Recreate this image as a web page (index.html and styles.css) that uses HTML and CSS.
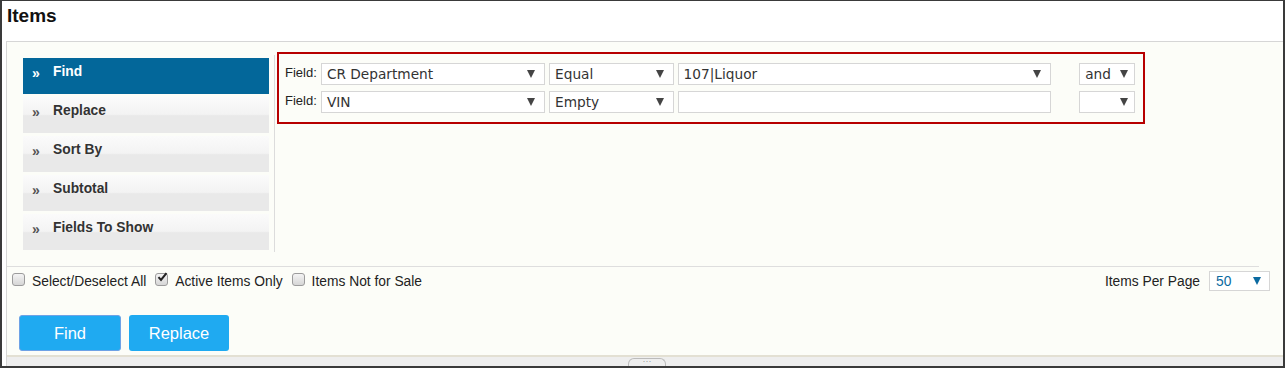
FILE: index.html
```html
<!DOCTYPE html>
<html lang="en">
<head>
    <meta charset="UTF-8">
    <meta name="viewport" content="width=device-width, initial-scale=1.0">
    <title>Items</title>
    <link rel="stylesheet" href="styles.css">
</head>
<body>
    <div class="page">
        <h1 class="page-title">Items</h1>
        <div class="panel">
            <div class="top-area">
                <ul class="side-menu">
                    <li class="menu-item active"><span class="chev">&raquo;</span>Find</li>
                    <li class="menu-item"><span class="chev">&raquo;</span>Replace</li>
                    <li class="menu-item"><span class="chev">&raquo;</span>Sort By</li>
                    <li class="menu-item"><span class="chev">&raquo;</span>Subtotal</li>
                    <li class="menu-item"><span class="chev">&raquo;</span>Fields To Show</li>
                </ul>
                <div class="criteria-area">
                    <div class="criteria-box">
                        <div class="criteria-row">
                            <span class="field-label">Field:</span>
                            <div class="select-box w-field"><span>CR Department</span><i class="arrow"></i></div>
                            <div class="select-box w-op"><span>Equal</span><i class="arrow"></i></div>
                            <div class="select-box w-value"><span>107|Liquor</span><i class="arrow"></i></div>
                            <div class="select-box w-join"><span>and</span><i class="arrow"></i></div>
                        </div>
                        <div class="criteria-row">
                            <span class="field-label">Field:</span>
                            <div class="select-box w-field"><span>VIN</span><i class="arrow"></i></div>
                            <div class="select-box w-op"><span>Empty</span><i class="arrow"></i></div>
                            <div class="text-box w-value"></div>
                            <div class="select-box w-join"><span></span><i class="arrow"></i></div>
                        </div>
                    </div>
                </div>
            </div>

            <div class="options-row">
                <label class="check"><span class="box"></span>Select/Deselect All</label>
                <label class="check"><span class="box checked"><svg width="11" height="10" viewBox="0 0 11 10"><path d="M1.5 5.2 L4 8 L9.5 1.2" fill="none" stroke="#222" stroke-width="2"/></svg></span>Active Items Only</label>
                <label class="check"><span class="box"></span>Items Not for Sale</label>
                <div class="per-page">
                    <span>Items Per Page</span>
                    <div class="page-select"><span>50</span><i class="arrow blue"></i></div>
                </div>
            </div>

            <div class="actions">
                <button class="btn focused">Find</button>
                <button class="btn">Replace</button>
            </div>

            <div class="resize-bar"><span class="grip">&middot;&middot;&middot;</span></div>
        </div>
    </div>
</body>
</html>
```

FILE: styles.css
```css
* {
    margin: 0;
    padding: 0;
    box-sizing: border-box;
}

body {
    background-color: white;
    font-family: "Liberation Sans", Arial, sans-serif;
    color: #333;
}

.page {
    width: 1285px;
    height: 368px;
    border-top: 1px solid #3a3a3a;
    border-left: 2px solid #3a3a3a;
    border-right: 2px solid #3a3a3a;
    border-bottom: 2px solid #3a3a3a;
    display: flex;
    flex-direction: column;
}

.page-title {
    height: 40px;
    padding: 3px 0 0 5px;
    font-size: 19px;
    line-height: 24px;
    color: #111;
}

.panel {
    flex: 1;
    margin-left: 4px;
    border-top: 1px solid #d6d6d6;
    border-left: 1px solid #d6d6d6;
    background-color: #fcfdf8;
    display: flex;
    flex-direction: column;
}

.top-area {
    height: 225px;
    display: flex;
    padding: 16px 0 0 16px;
    margin-right: 24px;
    border-bottom: 1px solid #dedede;
}

.side-menu {
    list-style: none;
    width: 246px;
}

.menu-item {
    height: 36px;
    margin-bottom: 3px;
    padding: 4px 0 0 9px;
    font-size: 13.8px;
    font-weight: bold;
    line-height: 18px;
    color: #333;
    background: linear-gradient(#fbfbfb 0%, #f3f3f3 48%, #e9e9e9 52%, #e9e9e9 100%);
}

.menu-item.active {
    background: #03679a;
    color: white;
}

.chev {
    display: inline-block;
    width: 21px;
    font-size: 14px;
    position: relative;
    top: 2px;
    color: #555;
}

.menu-item.active .chev {
    color: white;
}

.criteria-area {
    margin-left: 5px;
    margin-top: -3px;
    height: 197px;
    border-left: 1px solid #dcdcdc;
    padding-left: 2px;
}

.criteria-box {
    width: 868px;
    height: 72px;
    margin-top: -3px;
    border: 2px solid #b70000;
    padding: 9px 8px 0 6px;
    display: flex;
    flex-direction: column;
    gap: 6px;
}

.criteria-row {
    display: flex;
    align-items: flex-start;
    gap: 4px;
}

.field-label {
    width: 32px;
    font-size: 13px;
    line-height: 20px;
    color: #222;
}

.select-box, .text-box {
    height: 22px;
    border: 1px solid #d6d6d6;
    background-color: white;
    display: flex;
    align-items: center;
    justify-content: space-between;
    padding: 0 9px 0 5px;
    font-family: "DejaVu Sans", Verdana, sans-serif;
    font-size: 13.7px;
    color: #333;
}

.w-field { width: 225px; }
.w-op { width: 125px; }
.w-value { width: 375px; }
.w-join { width: 56px; margin-left: 24px; padding-right: 6px; }

.arrow {
    width: 0;
    height: 0;
    border-left: 4px solid transparent;
    border-right: 4px solid transparent;
    border-top: 8px solid #444;
}

.arrow.blue {
    border-top-color: #0b6aa0;
}

.options-row {
    display: flex;
    align-items: center;
    height: 24px;
    padding: 4px 13px 0 5px;
    font-size: 13.8px;
    color: #222;
}

.check {
    display: flex;
    align-items: center;
    margin-right: 9px;
}

.box {
    width: 13px;
    height: 13px;
    margin-right: 7px;
    border: 1px solid #9c9c9c;
    border-radius: 3px;
    background: linear-gradient(#f4f4f4, #d6d6d6);
    display: flex;
    align-items: center;
    justify-content: center;
    position: relative;
    top: -2px;
}

.box svg {
    position: relative;
    top: -2px;
    left: 1px;
}

.per-page {
    margin-left: auto;
    display: flex;
    align-items: center;
    gap: 9px;
}

.page-select {
    width: 61px;
    height: 20px;
    border: 1px solid #d6d6d6;
    background-color: white;
    display: flex;
    align-items: center;
    justify-content: space-between;
    padding: 0 8px 0 6px;
    color: #0b6aa0;
    font-size: 13.8px;
}

.actions {
    display: flex;
    gap: 8px;
    padding-left: 12px;
    margin-top: 24px;
}

.btn {
    width: 100px;
    height: 36px;
    border: none;
    border-radius: 3px;
    background-color: #1faaf1;
    color: white;
    font-family: "Liberation Sans", Arial, sans-serif;
    font-size: 16.5px;
}

.btn.focused {
    width: 102px;
    border: 1px solid #6ea2e6;
}

.resize-bar {
    margin-top: auto;
    height: 11px;
    border-top: 2px solid #e3e0d3;
    background-color: #eeeeee;
    display: flex;
    justify-content: center;
}

.grip {
    width: 38px;
    height: 8px;
    margin-top: 1px;
    margin-left: 4px;
    border: 1px solid #bbb;
    border-bottom: none;
    border-radius: 6px 6px 0 0;
    font-size: 9px;
    line-height: 5px;
    text-align: center;
    color: #999;
}
```
